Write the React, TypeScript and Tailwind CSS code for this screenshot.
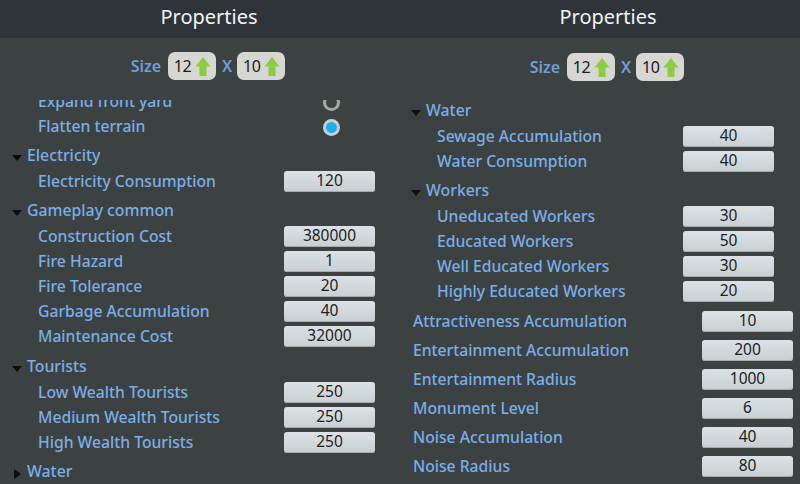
import React from 'react';

const FONT = "font-['Noto_Sans','Open_Sans',sans-serif]";

const UpArrow = () => (
  <svg width="16" height="21" viewBox="0 0 16 21" className="shrink-0">
    <path d="M8 1 L15.5 10.5 L11.5 10.5 L11.5 20 L4.5 20 L4.5 10.5 L0.5 10.5 Z" fill="#8ccc3f" />
  </svg>
);

const Stepper = ({ value }: { value: number }) => (
  <div className="w-[48px] h-[28px] rounded-[7px] bg-[#d6d6d2] flex items-center justify-end pr-[5px] gap-[4px] text-[16px] font-normal text-[#1a1a1a] tracking-[-0.5px]">
    <span>{value}</span>
    <UpArrow />
  </div>
);

const Header = ({ sizeClass }: { sizeClass: string }) => (
  <>
    <div className="h-[38px] bg-[#2f3439] flex items-center justify-center text-[20px] text-[#f2f4f4] pb-[4px]">Properties</div>
    <div className={`${sizeClass} pr-[2px] flex items-center justify-center text-[16px] font-semibold text-[#6c9fd8]`}>
      <span className="mr-[7px]">Size</span>
      <Stepper value={12} />
      <span className="ml-[6px] mr-[5px]">X</span>
      <Stepper value={10} />
    </div>
  </>
);

const Field = ({ value }: { value: string }) => (
  <div className="w-[91px] h-[21px] pb-[2px] rounded-[3px] bg-gradient-to-b from-[#dbe1e4] to-[#c8d0d2] shadow-[inset_0_-1px_0_#a5aaaa] flex items-center justify-center text-[15.5px] text-[#1c1f22]">
    {value}
  </div>
);

const Row = ({ label, value, h = 'h-[25px]', left, inputLeft }: { label: string; value: string; h?: string; left: string; inputLeft: string }) => (
  <div className={`flex items-center relative ${h}`}>
    <span className={`${left} text-[15.7px] font-medium text-[#7aaee8] whitespace-nowrap`}>{label}</span>
    <div className={`absolute ${inputLeft}`}><Field value={value} /></div>
  </div>
);

const Section = ({ title, open = true, pl }: { title: string; open?: boolean; pl: string }) => (
  <div className={`h-[26px] flex items-center ${pl} text-[15.8px] font-medium text-[#7aaee8]`}>
    <svg width="12" height="12" viewBox="0 0 12 12" className="shrink-0 mr-[4px] mt-[4px]">
      {open ? <path d="M1 3 L11 3 L6 9 Z" fill="#0d0d0d" /> : <path d="M3 1 L10 6 L3 11 Z" fill="#0d0d0d" />}
    </svg>
    <span>{title}</span>
  </div>
);

const Radio = ({ on }: { on?: boolean }) => (
  <div className={`w-[17px] h-[17px] mt-[2px] rounded-full flex items-center justify-center ${on ? 'bg-[#c9d0d0]' : 'bg-[#a8a8a2]'}`}>
    <div className={`w-[11px] h-[11px] rounded-full ${on ? 'bg-[#14b4ee]' : 'bg-[#3c4242]'}`} />
  </div>
);

const Toggle = ({ label, on }: { label: string; on?: boolean }) => (
  <div className="h-[25px] flex items-center relative">
    <span className="ml-[38px] text-[15.7px] font-medium text-[#7aaee8]">{label}</span>
    <div className="absolute left-[323px]"><Radio on={on} /></div>
  </div>
);

const leftRows = (rows: [string, string][]) =>
  rows.map(([label, value]) => (
    <Row key={label} label={label} value={value} left="ml-[38px]" inputLeft="left-[284px]" />
  ));

const rightRows = (rows: [string, string][]) =>
  rows.map(([label, value]) => (
    <Row key={label} label={label} value={value} left="ml-[37px]" inputLeft="left-[283px]" />
  ));

const App: React.FC = () => {
  return (
    <div className={`w-[800px] h-[484px] overflow-hidden flex bg-[#3c4242] ${FONT}`}>
      <div className="w-[400px] shrink-0 flex flex-col">
        <div className="w-[418px]"><Header sizeClass="h-[62px] pb-[6px]" /></div>
        <div className="flex-1 overflow-hidden">
          <div className="-mt-[11px]">
            <Toggle label="Expand front yard" />
            <Toggle label="Flatten terrain" on />
            <div className="h-[4px]" />
            <Section title="Electricity" pl="pl-[11px]" />
            {leftRows([['Electricity Consumption', '120']])}
            <div className="h-[4px]" />
            <Section title="Gameplay common" pl="pl-[11px]" />
            {leftRows([
              ['Construction Cost', '380000'],
              ['Fire Hazard', '1'],
              ['Fire Tolerance', '20'],
              ['Garbage Accumulation', '40'],
              ['Maintenance Cost', '32000'],
            ])}
            <div className="h-[5px]" />
            <Section title="Tourists" pl="pl-[11px]" />
            {leftRows([
              ['Low Wealth Tourists', '250'],
              ['Medium Wealth Tourists', '250'],
              ['High Wealth Tourists', '250'],
            ])}
            <div className="h-[4px]" />
            <Section title="Water" open={false} pl="pl-[11px]" />
          </div>
        </div>
      </div>
      <div className="w-[400px] shrink-0 flex flex-col">
        <div className="w-[416px]"><Header sizeClass="h-[58px]" /></div>
        <div className="flex-1 overflow-hidden">
          <div className="pt-[2px]">
            <Section title="Water" pl="pl-[10px]" />
            {rightRows([
              ['Sewage Accumulation', '40'],
              ['Water Consumption', '40'],
            ])}
            <div className="h-[4px]" />
            <Section title="Workers" pl="pl-[10px]" />
            {rightRows([
              ['Uneducated Workers', '30'],
              ['Educated Workers', '50'],
              ['Well Educated Workers', '30'],
              ['Highly Educated Workers', '20'],
            ])}
            <div className="h-[3px]" />
            {[
              ['Attractiveness Accumulation', '10'],
              ['Entertainment Accumulation', '200'],
              ['Entertainment Radius', '1000'],
              ['Monument Level', '6'],
              ['Noise Accumulation', '40'],
              ['Noise Radius', '80'],
            ].map(([label, value]) => (
              <Row key={label} label={label} value={value} h="h-[29px]" left="ml-[13px]" inputLeft="left-[302px]" />
            ))}
          </div>
        </div>
      </div>
    </div>
  );
};

export default App;
